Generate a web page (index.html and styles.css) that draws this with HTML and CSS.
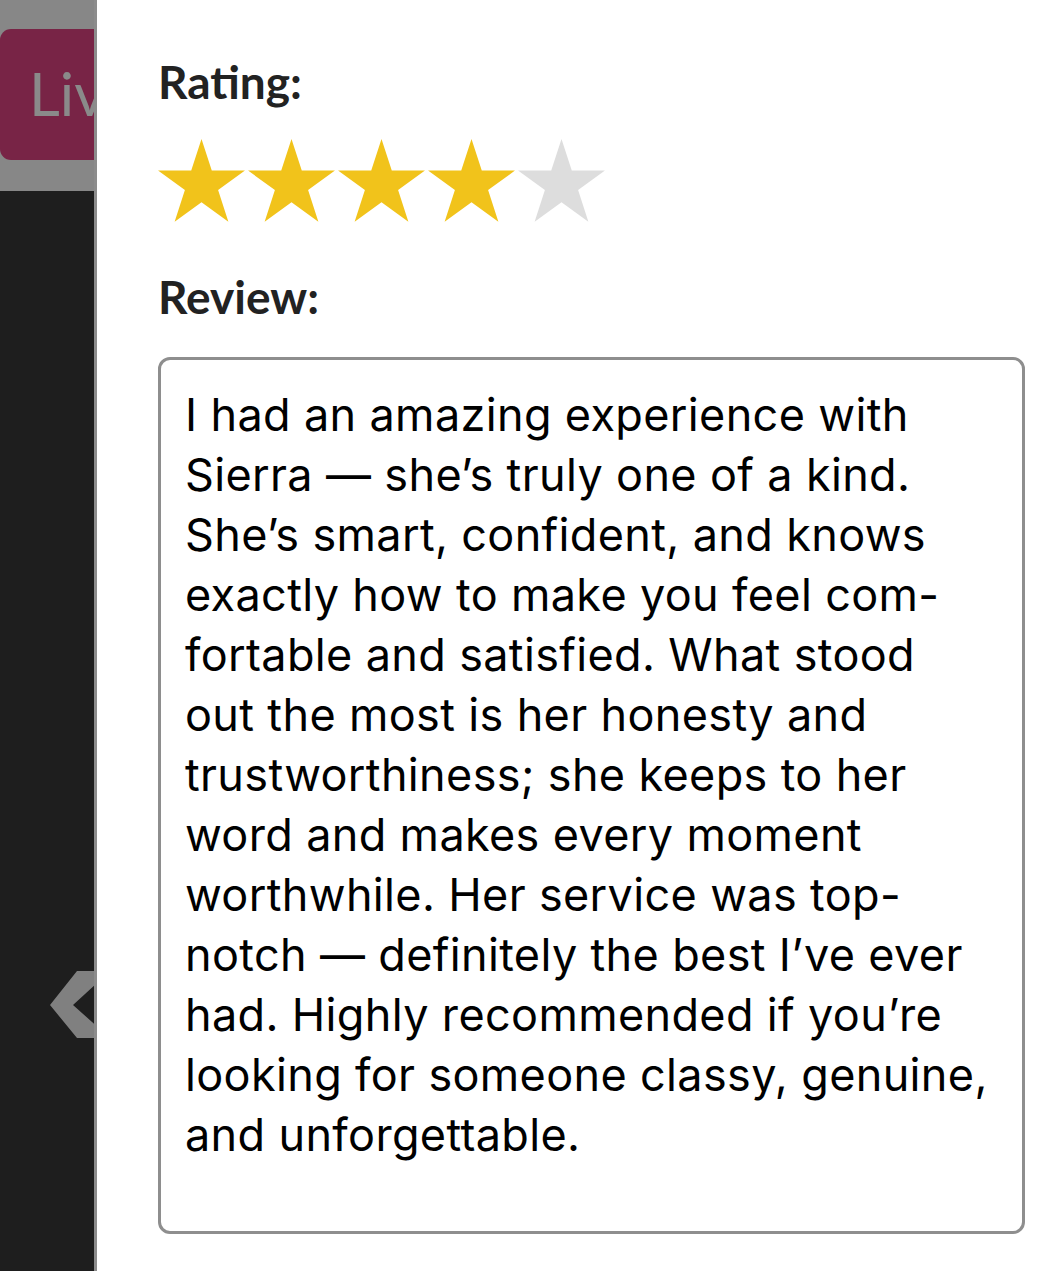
FILE: index.html
```html
<!DOCTYPE html>
<html lang="en">
<head>
<meta charset="utf-8">
<title>Review</title>
<link rel="stylesheet" href="styles.css">
</head>
<body>
<div class="side">
  <div class="side-top">
    <div class="live-btn"><span class="live-text">Live</span></div>
  </div>
  <div class="side-dark">
    <svg class="chevron" viewBox="0 0 60 70" width="60" height="70">
      <polygon points="27,0 60,0 23,34 60,67 27,67 0,34" fill="#808080"/>
    </svg>
  </div>
</div>
<main class="panel">
  <h2 class="label">Rating:</h2>
  <div class="stars">
    <svg class="star on" viewBox="0 0 95.1 90.45"><polygon points="47.55,0 58.78,34.55 95.1,34.55 65.71,55.9 76.94,90.45 47.55,69.1 18.16,90.45 29.39,55.9 0,34.55 36.32,34.55"/></svg>
    <svg class="star on" viewBox="0 0 95.1 90.45"><polygon points="47.55,0 58.78,34.55 95.1,34.55 65.71,55.9 76.94,90.45 47.55,69.1 18.16,90.45 29.39,55.9 0,34.55 36.32,34.55"/></svg>
    <svg class="star on" viewBox="0 0 95.1 90.45"><polygon points="47.55,0 58.78,34.55 95.1,34.55 65.71,55.9 76.94,90.45 47.55,69.1 18.16,90.45 29.39,55.9 0,34.55 36.32,34.55"/></svg>
    <svg class="star on" viewBox="0 0 95.1 90.45"><polygon points="47.55,0 58.78,34.55 95.1,34.55 65.71,55.9 76.94,90.45 47.55,69.1 18.16,90.45 29.39,55.9 0,34.55 36.32,34.55"/></svg>
    <svg class="star off" viewBox="0 0 95.1 90.45"><polygon points="47.55,0 58.78,34.55 95.1,34.55 65.71,55.9 76.94,90.45 47.55,69.1 18.16,90.45 29.39,55.9 0,34.55 36.32,34.55"/></svg>
  </div>
  <h2 class="label label-review">Review:</h2>
  <div class="review-box">
    <p class="review-text">I had an amazing experience with<br>Sierra — she’s truly one of a kind.<br>She’s smart, confident, and knows<br>exactly how to make you feel com-<br>fortable and satisfied. What stood<br>out the most is her honesty and<br>trustworthiness; she keeps to her<br>word and makes every moment<br>worthwhile. Her service was top-<br>notch — definitely the best I’ve ever<br>had. Highly recommended if you’re<br>looking for someone classy, genuine,<br>and unforgettable.</p>
  </div>
</main>
</body>
</html>
```
FILE: styles.css
```css
html, body {
  margin: 0;
  padding: 0;
  height: 1271px;
  overflow: hidden;
  background: #ffffff;
}
body {
  display: flex;
}
.side {
  width: 94px;
  flex: none;
  height: 1271px;
  display: flex;
  flex-direction: column;
  border-right: 3px solid #8c8c8c;
  overflow: hidden;
}
.side-top {
  background: #878787;
  padding: 29px 0 31px;
}
.live-btn {
  height: 131px;
  background: #782446;
  border-radius: 11px 0 0 11px;
  overflow: hidden;
  white-space: nowrap;
  padding-left: 29px;
  box-sizing: border-box;
}
.live-text {
  font-family: Lato, "Open Sans", sans-serif;
  font-size: 60px;
  line-height: 131px;
  color: #8a8a8a;
  display: block;
  transform: translateY(-1px);
}
.side-dark {
  flex: 1;
  background: #1e1e1e;
  padding-top: 780px;
}
.chevron {
  display: block;
  margin-left: 50px;
}
.panel {
  flex: 1;
  padding: 54px 0 0 61px;
  box-sizing: border-box;
}
.label {
  margin: 0;
  font-family: Lato, "Open Sans", sans-serif;
  font-weight: 700;
  font-size: 46px;
  line-height: 56px;
  color: #222222;
}
.stars {
  display: flex;
  gap: 3px;
  margin-top: 29px;
}
.star {
  width: 87px;
  height: 82.7px;
  display: block;
}
.star.on polygon { fill: #f1c31b; }
.star.off polygon { fill: #dddddd; }
.label-review {
  margin-top: 47px;
}
.review-box {
  margin-top: 32px;
  width: 867px;
  height: 877px;
  box-sizing: border-box;
  border: 3px solid #8e8e8e;
  border-radius: 12px;
  padding: 25px 0 0 24px;
}
.review-text {
  margin: 0;
  font-family: Inter, "Noto Sans", sans-serif;
  font-size: 45px;
  letter-spacing: 0.35px;
  line-height: 60px;
  color: #000000;
  white-space: nowrap;
}
```
